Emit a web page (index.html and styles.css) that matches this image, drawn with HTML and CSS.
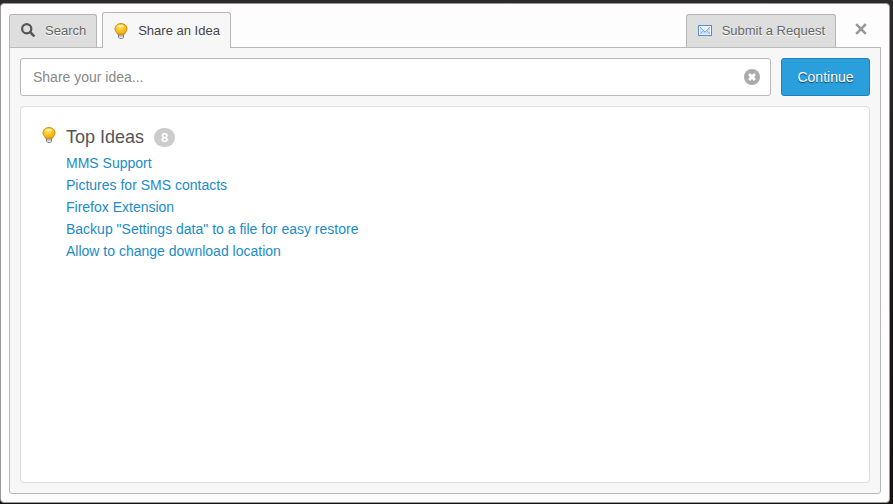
FILE: index.html
```html
<!DOCTYPE html>
<html lang="en">
<head>
    <meta charset="UTF-8">
    <meta name="viewport" content="width=device-width, initial-scale=1.0">
    <title>Share an Idea</title>
    <link rel="stylesheet" href="styles.css">
</head>
<body>
    <!-- Shared bulb icon -->
    <svg class="defs" width="0" height="0" aria-hidden="true">
        <defs>
            <radialGradient id="glow" cx="0.4" cy="0.3" r="0.7">
                <stop offset="0" stop-color="#fff3a0"/>
                <stop offset="0.35" stop-color="#ffd033"/>
                <stop offset="1" stop-color="#f7a80c"/>
            </radialGradient>
            <symbol id="bulb" viewBox="0 0 14 16">
                <path d="M4.5 11h5v3.2L8.3 15.5H5.7L4.5 14.2z" fill="#e4e4e4" stroke="#777" stroke-width="0.9"/>
                <path d="M4.5 12.8h5" stroke="#888" stroke-width="0.8"/>
                <path d="M7 0.6C3.4 0.6 1 2.8 1 5.7c0 2.3 1.6 3.2 2.5 5.5h7C11.4 8.9 13 8 13 5.7 13 2.8 10.6 0.6 7 0.6z" fill="url(#glow)" stroke="#c98a10" stroke-width="1"/>
                <path d="M3.8 3.3C5 1.9 9 1.9 10.2 3.3 9 4.3 5 4.3 3.8 3.3z" fill="#fff6c4"/>
            </symbol>
        </defs>
    </svg>

    <div class="widget">
        <div class="header">
            <button type="button" class="tab">
                <svg class="icon" viewBox="0 0 14 14" width="14" height="14">
                    <circle cx="5.7" cy="5.7" r="4.6" fill="none" stroke="#555" stroke-width="2.2"/>
                    <path d="M9.2 9.2L12.6 12.6" stroke="#555" stroke-width="2.6" stroke-linecap="round"/>
                </svg>
                Search
            </button>
            <button type="button" class="tab active">
                <svg class="icon" width="14" height="16"><use href="#bulb"/></svg>
                Share an Idea
            </button>
            <button type="button" class="tab submit">
                <svg class="icon mail" viewBox="0 0 14 11" width="14" height="11">
                    <rect x="0.5" y="0.5" width="13" height="10" fill="#c9defa" stroke="#5a8acb"/>
                    <rect x="1.5" y="1.5" width="11" height="8" fill="none" stroke="#f2f8ff"/>
                    <path d="M2 9L5.2 5.8M12 9L8.8 5.8" stroke="#8fb4e6"/>
                    <path d="M2 2L7 7.2L12 2" fill="#e6f1ff" stroke="#7ba4dc"/>
                </svg>
                Submit a Request
            </button>
            <button type="button" class="close" aria-label="Close">
                <svg viewBox="0 0 12 12" width="12" height="12">
                    <path d="M1.2 1.2L10.8 10.8M10.8 1.2L1.2 10.8" stroke="#999" stroke-width="2.6"/>
                </svg>
            </button>
        </div>

        <div class="panel">
            <form class="idea-form">
                <div class="field">
                    <input type="text" class="idea-input" placeholder="Share your idea..." aria-label="Share your idea">
                    <button type="button" class="clear" aria-label="Clear">
                        <svg viewBox="0 0 16 16" width="16" height="16">
                            <circle cx="8" cy="8" r="8" fill="#aaa"/>
                            <path d="M5 5L11 11M11 5L5 11" stroke="#fff" stroke-width="2.8"/>
                        </svg>
                    </button>
                </div>
                <button type="submit" class="continue">Continue</button>
            </form>

            <div class="results">
                <svg class="results-icon" width="14" height="16"><use href="#bulb"/></svg>
                <div>
                    <h1>Top Ideas <span class="count">8</span></h1>
                    <ul>
                        <li><a href="#">MMS Support</a></li>
                        <li><a href="#">Pictures for SMS contacts</a></li>
                        <li><a href="#">Firefox Extension</a></li>
                        <li><a href="#">Backup "Settings data" to a file for easy restore</a></li>
                        <li><a href="#">Allow to change download location</a></li>
                    </ul>
                </div>
            </div>
        </div>
    </div>
</body>
</html>
```
FILE: styles.css
```css
* {
    box-sizing: border-box;
}

body {
    display: flex;
    min-height: 100vh;
    margin: 0;
    padding: 3px 3px 1px 0;
    background: linear-gradient(#2c2a2b, #1c191a 60%, #161212);
    font-family: "Liberation Sans", Arial, sans-serif;
    font-size: 14px;
    color: #444;
}

button,
input {
    font-family: inherit;
}

.defs {
    position: absolute;
}

.widget {
    display: flex;
    flex-direction: column;
    flex: 1;
    padding: 8px;
    border: 1px solid #999;
    border-radius: 4px;
    background: #fdfdfd;
}

/* Tabs */
.header {
    display: flex;
    align-items: flex-end;
    height: 35px;
}

.tab {
    display: flex;
    align-items: center;
    height: 33px;
    padding: 0 10px 2px 11px;
    border: 1px solid #b5b5b5;
    border-bottom: none;
    border-radius: 3px 3px 0 0;
    background: #dedede;
    color: #666;
    font-size: 13px;
    text-shadow: 0 1px 0 #fff;
    cursor: pointer;
}

.tab .icon {
    margin-right: 10px;
}

.tab.active {
    z-index: 1;
    height: 36px;
    margin: 0 0 -1px 5px;
    padding-bottom: 0;
    background: #f7f7f7;
    color: #444;
}

.tab.submit {
    margin-left: auto;
}

.close {
    display: flex;
    align-items: center;
    height: 36px;
    margin-left: 18px;
    padding: 0 14px 0 1px;
    border: none;
    background: none;
    cursor: pointer;
}

/* Main panel */
.panel {
    display: flex;
    flex-direction: column;
    flex: 1;
    gap: 10px;
    padding: 10px;
    border: 1px solid #b9b9b9;
    border-radius: 0 0 3px 3px;
    background: #f7f7f7;
}

.idea-form {
    display: flex;
    gap: 10px;
}

.field {
    position: relative;
    flex: 1;
}

.idea-input {
    display: block;
    width: 100%;
    height: 38px;
    padding: 0 36px 0 12px;
    border: 1px solid #b9b9b9;
    border-radius: 3px;
    background: #fff;
    color: #444;
    font-size: 14px;
}

.idea-input::placeholder {
    color: #888;
}

.clear {
    position: absolute;
    top: 11px;
    right: 11px;
    display: flex;
    padding: 0;
    border: none;
    background: none;
    cursor: pointer;
}

.continue {
    min-width: 89px;
    height: 38px;
    padding: 0 15px;
    border: 1px solid #1c82b8;
    border-radius: 3px;
    background: #2b9fdc;
    color: #fff;
    font-size: 14px;
    text-shadow: 0 1px 1px rgba(0, 0, 0, 0.6);
    cursor: pointer;
}

/* List of ideas */
.results {
    display: flex;
    flex: 1;
    gap: 10px;
    padding: 19px 21px;
    border: 1px solid #ddd;
    border-radius: 4px;
    background: #fff;
}

.results-icon {
    margin-top: 1px;
}

h1 {
    display: flex;
    align-items: center;
    gap: 10px;
    margin: 0;
    font-size: 18px;
    font-weight: normal;
    line-height: 18px;
    color: #555;
}

.count {
    margin-top: 2px;
    padding: 0 7px;
    border-radius: 10px;
    background: #ccc;
    color: #fff;
    font-size: 13px;
    font-weight: bold;
    line-height: 19px;
}

ul {
    margin: 5px 0 0;
    padding: 0;
    list-style: none;
}

li {
    line-height: 22px;
}

a {
    color: #1b8bc8;
    text-decoration: none;
}

a:hover {
    text-decoration: underline;
}
```
